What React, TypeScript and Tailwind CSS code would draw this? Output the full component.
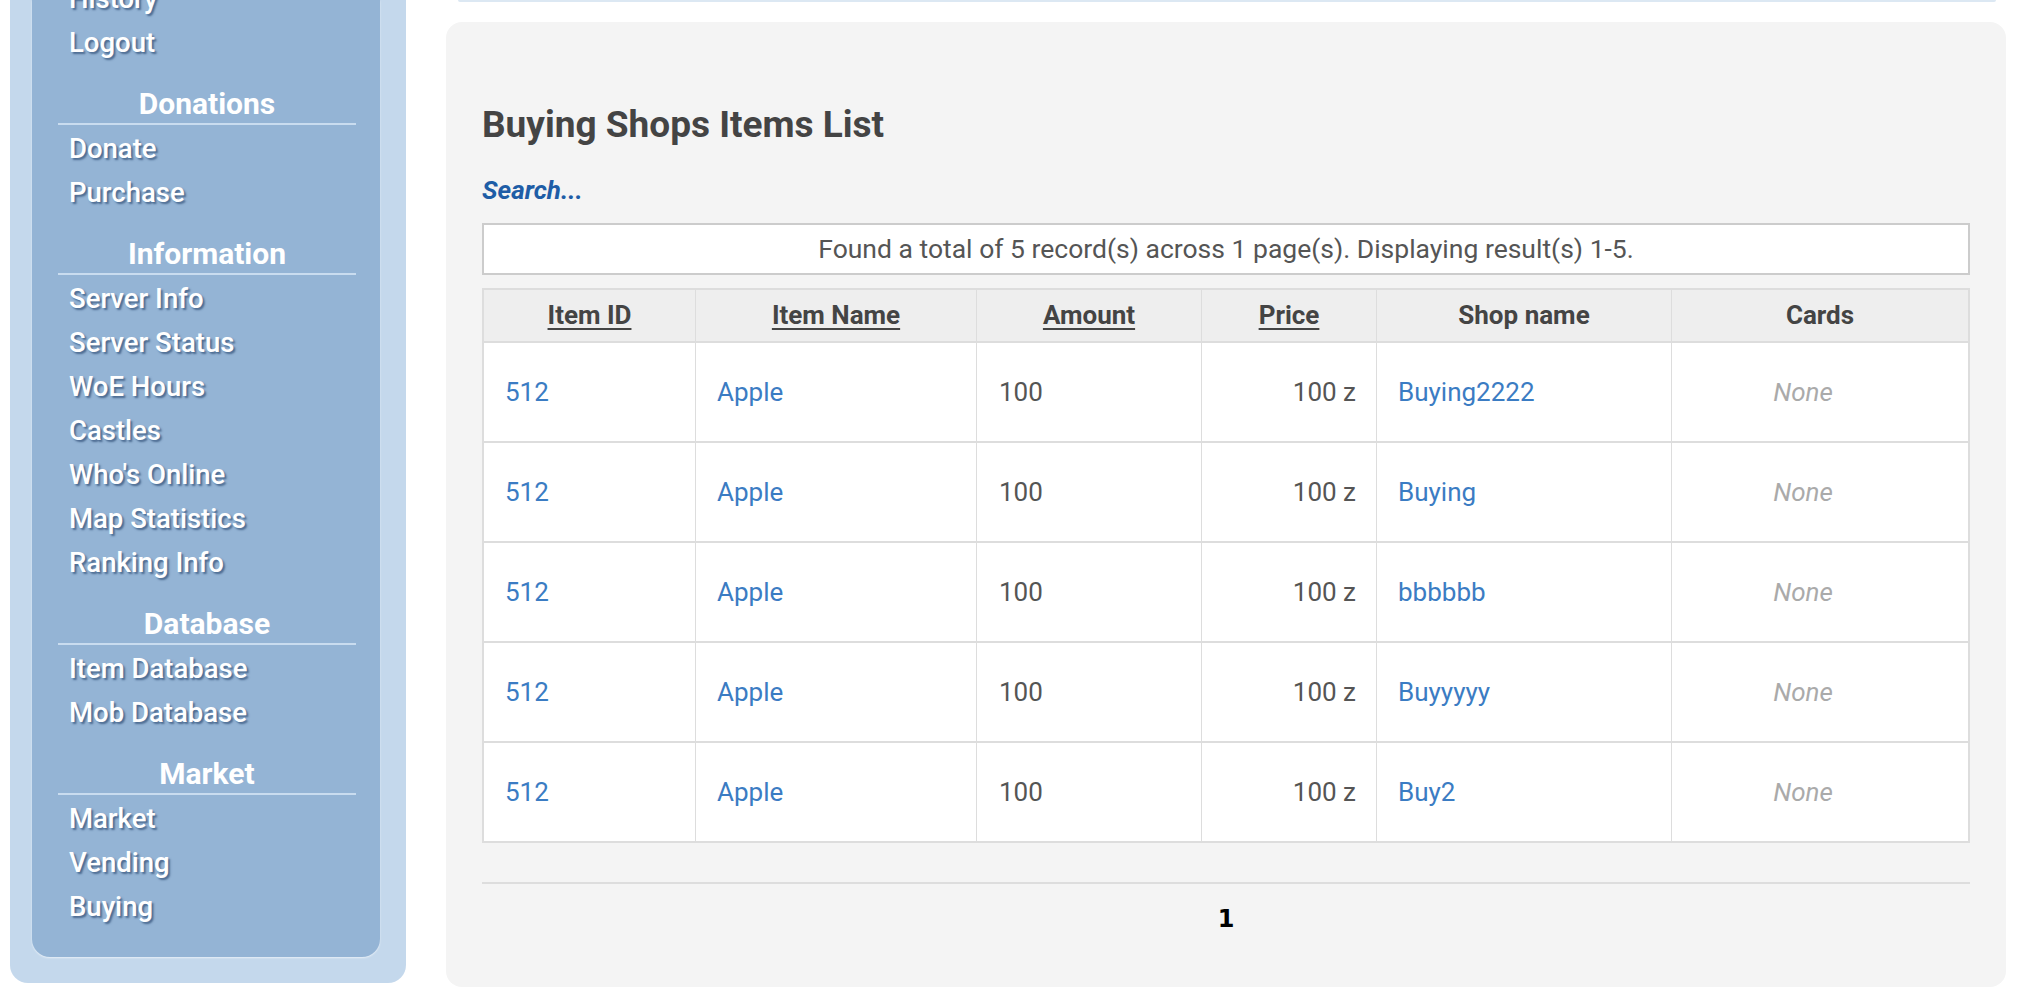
import React from "react";

const topLinks = ["History", "Logout"];

const sections: { title: string; links: string[] }[] = [
  { title: "Donations", links: ["Donate", "Purchase"] },
  {
    title: "Information",
    links: [
      "Server Info",
      "Server Status",
      "WoE Hours",
      "Castles",
      "Who's Online",
      "Map Statistics",
      "Ranking Info",
    ],
  },
  { title: "Database", links: ["Item Database", "Mob Database"] },
  { title: "Market", links: ["Market", "Vending", "Buying"] },
];

const rows = [
  { id: "512", name: "Apple", amount: "100", price: "100 z", shop: "Buying2222" },
  { id: "512", name: "Apple", amount: "100", price: "100 z", shop: "Buying" },
  { id: "512", name: "Apple", amount: "100", price: "100 z", shop: "bbbbbb" },
  { id: "512", name: "Apple", amount: "100", price: "100 z", shop: "Buyyyyy" },
  { id: "512", name: "Apple", amount: "100", price: "100 z", shop: "Buy2" },
];

function SideLink({ label }: { label: string }) {
  return (
    <li className="h-[44px] leading-[44px] pl-[37px] text-white text-[27.5px] font-medium [text-shadow:2px_2px_2px_rgba(50,80,120,0.75)] whitespace-nowrap">
      <a href="#">{label}</a>
    </li>
  );
}

const gridCols = "grid grid-cols-[211px_281px_225px_175px_295px_297px]";

export default function App() {
  return (
    <div className="h-[1002px] w-[2032px] overflow-hidden bg-white flex items-start gap-[40px] pl-[10px] font-['Roboto','Open_Sans',sans-serif]">
      {/* Sidebar */}
      <aside className="w-[396px] shrink-0 bg-[#c4d8ec] rounded-b-[18px] pl-[22px] pr-[26px] pb-[26px]">
        <div className="bg-[#94b4d5] rounded-b-[18px] pb-[28px] overflow-hidden shadow-[0_1px_2px_rgba(255,255,255,0.6)]">
          <ul className="-mt-[23px]">
            {topLinks.map((l) => (
              <SideLink key={l} label={l} />
            ))}
          </ul>
          {sections.map((s) => (
            <div key={s.title} className="mt-[21px]">
              <div className="ml-[26px] mr-[24px]">
                <div className="text-center text-white font-bold text-[30px] leading-[36px] pb-[1px]">
                  {s.title}
                </div>
                <div className="h-[2px] bg-[#c9dcef]" />
              </div>
              <ul className="pt-[2px]">
                {s.links.map((l) => (
                  <SideLink key={l} label={l} />
                ))}
              </ul>
            </div>
          ))}
        </div>
      </aside>

      {/* Main */}
      <main className="w-[1560px] shrink-0">
        <div className="ml-[12px] mr-[10px] h-[2px] bg-[#dce8f3] rounded-b-[2px]" />
        <div className="mt-[20px] bg-[#f4f4f4] rounded-[16px] px-[36px] pt-[82px] pb-[53px]">
          <h2 className="text-[37px] leading-[41px] font-bold text-[#444]">
            Buying Shops Items List
          </h2>
          <p className="mt-[30px] h-[30px] leading-[30px]">
            <a href="#" className="text-[26px] font-bold italic text-[#1e5da6]">
              Search...
            </a>
          </p>
          <div className="mt-[18px] h-[52px] border-2 border-[#cccccc] bg-white flex items-center justify-center text-[26.5px] text-[#555]">
            Found a total of 5 record(s) across 1 page(s). Displaying result(s) 1-5.
          </div>

          <div className="mt-[13px] w-[1488px] border-x-2 border-t-2 border-[#dddddd] bg-white">
            <div className={`${gridCols} h-[53px] border-b-2 border-[#dddddd] bg-[#eeeeee] text-[26px] font-bold text-[#444]`}>
              {["Item ID", "Item Name", "Amount", "Price"].map((h, i) => (
                <div
                  key={h}
                  className={`flex items-center justify-center ${i > 0 ? "border-l border-[#dddddd]" : ""}`}
                >
                  <a href="#" className="underline decoration-2 underline-offset-[4px]">
                    {h}
                  </a>
                </div>
              ))}
              <div className="flex items-center justify-center border-l border-[#dddddd]">Shop name</div>
              <div className="flex items-center justify-center border-l border-[#dddddd]">Cards</div>
            </div>
            {rows.map((r, idx) => (
              <div key={idx} className={`${gridCols} h-[100px] border-b-2 border-[#dddddd] text-[26px]`}>
                <div className="flex items-center pl-[21px] text-[#3b7cc3]">
                  <a href="#">{r.id}</a>
                </div>
                <div className="flex items-center pl-[21px] border-l border-[#dddddd] text-[#3b7cc3]">
                  <a href="#">{r.name}</a>
                </div>
                <div className="flex items-center pl-[22px] border-l border-[#dddddd] text-[#555]">
                  {r.amount}
                </div>
                <div className="flex items-center justify-end pr-[20px] border-l border-[#dddddd] text-[#555]">
                  {r.price}
                </div>
                <div className="flex items-center pl-[21px] border-l border-[#dddddd] text-[#3b7cc3]">
                  <a href="#">{r.shop}</a>
                </div>
                <div className="flex items-center justify-center pr-[34px] border-l border-[#dddddd] text-[#aaaaaa] italic">
                  None
                </div>
              </div>
            ))}
          </div>

          <div className="mt-[39px] h-[2px] bg-[#dddddd]" />
          <div className="mt-[20px] h-[30px] leading-[30px] text-center text-[24px] font-bold text-black font-['DejaVu_Sans',sans-serif]">
            1
          </div>
        </div>
      </main>
    </div>
  );
}
